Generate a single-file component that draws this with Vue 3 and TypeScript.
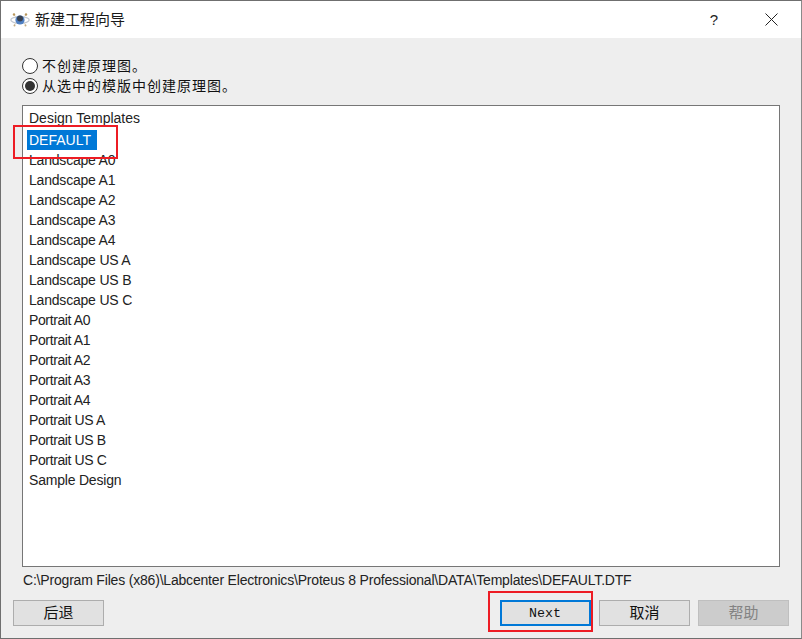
<script setup lang="ts">
const templates: string[] = [
  'Landscape A0', 'Landscape A1', 'Landscape A2', 'Landscape A3', 'Landscape A4',
  'Landscape US A', 'Landscape US B', 'Landscape US C',
  'Portrait A0', 'Portrait A1', 'Portrait A2', 'Portrait A3', 'Portrait A4',
  'Portrait US A', 'Portrait US B', 'Portrait US C', 'Sample Design',
]
</script>

<template>
  <div class="win">
    <header class="title">
      <svg class="logo" width="20" height="16" viewBox="0 0 20 16">
        <ellipse cx="10" cy="8" rx="9.2" ry="3.2" fill="none" stroke="#c4c9d2" stroke-width="1.3" />
        <path d="M4 3 L16 13 M16 3 L4 13" stroke="#d5d2c8" stroke-width="1" fill="none" />
        <circle cx="10" cy="8" r="4.6" fill="#4f80c4" />
        <circle cx="10" cy="6.6" r="3" fill="#39414f" />
        <circle cx="4" cy="2.5" r="1.2" fill="#b9965a" />
        <circle cx="16" cy="2.5" r="1.2" fill="#b9965a" />
        <circle cx="4.5" cy="13.5" r="1" fill="#c4ab80" />
        <circle cx="15.5" cy="13.5" r="1" fill="#c4ab80" />
      </svg>
      <span class="title-text">新建工程向导</span>
      <span class="help">?</span>
      <svg class="close" width="13" height="13" viewBox="0 0 13 13">
        <path d="M0.5 0.5 L12.5 12.5 M12.5 0.5 L0.5 12.5" stroke="#222" stroke-width="1" fill="none" />
      </svg>
    </header>

    <main class="body">
      <div class="radios">
        <label class="radio"><span class="dot"></span>不创建原理图。</label>
        <label class="radio"><span class="dot on"></span>从选中的模版中创建原理图。</label>
      </div>

      <div class="list">
        <div class="row first">Design Templates</div>
        <div class="row sel-row"><span class="sel">DEFAULT</span></div>
        <div v-for="t in templates" :key="t" class="row" :class="{ narrow: t.startsWith('Portrait') }">{{ t }}</div>
      </div>

      <div class="path">C:\Program Files (x86)\Labcenter Electronics\Proteus 8 Professional\DATA\Templates\DEFAULT.DTF</div>

      <footer class="buttons">
        <button class="btn">后退</button>
        <span class="spacer"></span>
        <button class="btn next">Next</button>
        <button class="btn">取消</button>
        <button class="btn off">帮助</button>
      </footer>
    </main>

    <div class="mark mark-a"></div>
    <div class="mark mark-b"></div>
  </div>
</template>

<style scoped>
.win {
  position: relative;
  box-sizing: border-box;
  width: 802px;
  height: 639px;
  border: 1px solid #6f6f6f;
  border-right-color: #8a8a8a;
  background: #eeeeee;
  display: flex;
  flex-direction: column;
  font-family: "Liberation Sans", "Noto Sans CJK SC", sans-serif;
  font-size: 14px;
  color: #111;
  overflow: hidden;
}
.title {
  height: 37px;
  flex: none;
  background: #fff;
  display: flex;
  align-items: center;
  padding-left: 9px;
}
.logo { flex: none; margin-right: 5px; }
.title-text { font-size: 15px; line-height: 36px; height: 36px; color: #1a1a1a; }
.help {
  margin-left: auto;
  width: 14px;
  font-size: 15px;
  line-height: 36px;
  height: 36px;
  text-align: center;
  color: #222;
}
.close { margin: 0 23px 0 44px; flex: none; }
.body {
  flex: 1;
  display: flex;
  flex-direction: column;
  padding: 18px 12px 0 12px;
  min-height: 0;
}
.radios {
  display: flex;
  flex-direction: column;
  padding-left: 9px;
}
.radio {
  height: 20px;
  display: flex;
  align-items: center;
  line-height: 20px;
  letter-spacing: 1px;
}
.dot {
  box-sizing: border-box;
  width: 16px;
  height: 16px;
  margin-right: 4px;
  border: 1px solid #333;
  border-radius: 50%;
  background: #fff;
  display: flex;
  align-items: center;
  justify-content: center;
}
.dot.on::after {
  content: "";
  width: 10px;
  height: 10px;
  border-radius: 50%;
  background: #333;
}
.list {
  box-sizing: border-box;
  margin: 9px 9px 0 9px;
  height: 462px;
  flex: none;
  background: #fff;
  border: 1px solid #767676;
  padding: 2px 0 0 4px;
  color: #222;
}
.row {
  height: 20px;
  line-height: 20px;
  padding-left: 2px;
  letter-spacing: -0.2px;
}
.first { margin-bottom: 2px; letter-spacing: 0; }
.narrow { letter-spacing: -0.38px; }
.sel-row { padding-left: 0; letter-spacing: 0; }
.sel {
  display: inline-block;
  width: 70px;
  height: 20px;
  padding-left: 2px;
  box-sizing: border-box;
  background: #0078d7;
  color: #fff;
}
.path {
  margin: 4px 0 0 10px;
  height: 18px;
  line-height: 18px;
  letter-spacing: -0.19px;
  color: #222;
  white-space: nowrap;
}
.buttons {
  display: flex;
  gap: 8px;
  margin-top: 11px;
}
.spacer { flex: 1; }
.btn {
  flex: none;
  box-sizing: border-box;
  width: 91px;
  height: 26px;
  padding: 0;
  border: 1px solid #adadad;
  background: #e1e1e1;
  font: inherit;
  font-size: 15px;
  line-height: 22px;
  color: #111;
}
.btn.next {
  border: 2px solid #0078d7;
  padding: 1px 1px 0 0;
  font-family: "Liberation Mono", monospace;
  font-size: 13.3px;
}
.btn.off {
  background: #cccccc;
  border-color: #bfbfbf;
  color: #838383;
}
.mark {
  position: absolute;
  box-sizing: border-box;
  border: 2px solid #ed1c24;
  pointer-events: none;
}
.mark-a { left: 12px; top: 124px; width: 105px; height: 34px; }
.mark-b { left: 487px; top: 590px; width: 105px; height: 41px; }
</style>

<style>
html, body { margin: 0; background: #fff; }
</style>
